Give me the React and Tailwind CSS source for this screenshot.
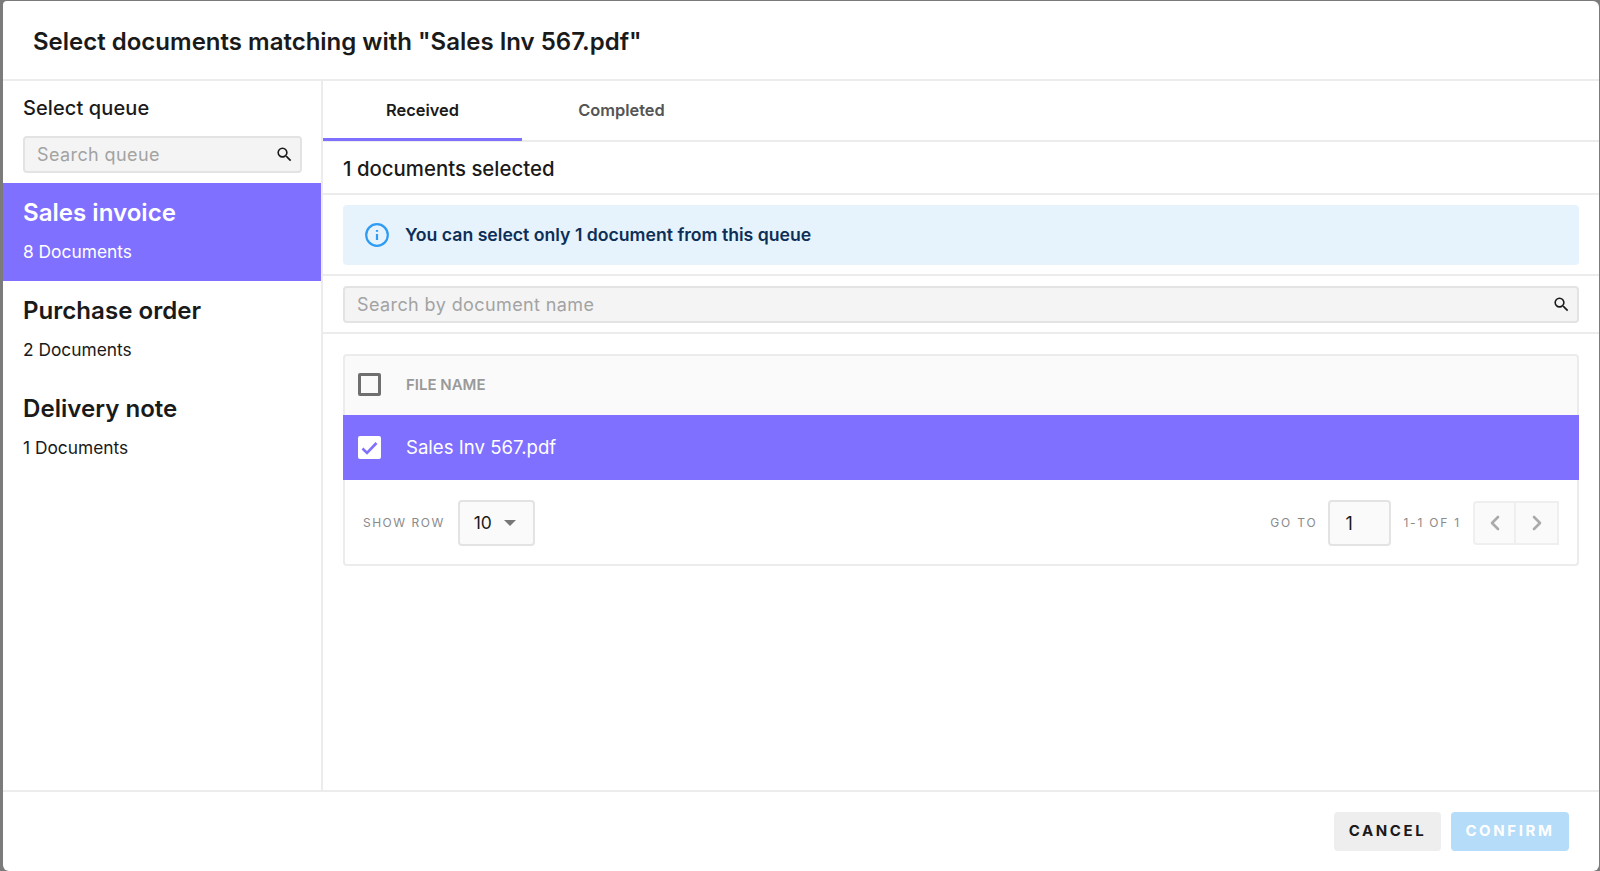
import { ChevronLeft, ChevronRight } from 'lucide-react';

const queues = [
    { name: 'Sales invoice', count: '8 Documents', active: true },
    { name: 'Purchase order', count: '2 Documents' },
    { name: 'Delivery note', count: '1 Documents' },
];

function SearchField({ placeholder }) {
    return (
        <div className="flex items-center justify-between h-full rounded-[4px] border-2 border-[#e3e3e3] bg-[#f4f4f4] pl-[12px] pr-[6px]">
            <span className="text-[18px] tracking-[0.4px] text-[#a3a3a3]">{placeholder}</span>
            <svg width="19" height="19" viewBox="0 0 24 24" fill="#1a1a1a">
                <path d="M15.5 14h-.79l-.28-.27A6.471 6.471 0 0 0 16 9.5 6.5 6.5 0 1 0 9.5 16c1.61 0 3.09-.59 4.23-1.57l.27.28v.79l5 4.99L20.49 19l-4.99-5zm-6 0C7.01 14 5 11.99 5 9.5S7.01 5 9.5 5 14 7.01 14 9.5 11.99 14 9.5 14z" />
            </svg>
        </div>
    );
}

export default function App() {
    return (
        <div className="h-[871px] bg-[#7b7b7b] pt-px pl-[3px] pr-px overflow-hidden font-['Inter',sans-serif] text-[#1a1a1a]">
            <div className="h-full flex flex-col bg-white rounded-tl-[4px] rounded-tr-[6px] rounded-b-[6px]">
                {/* Header */}
                <div className="h-[80px] shrink-0 flex items-center pl-[30px] pt-[3px] border-b-2 border-[#ececec]">
                    <h1 className="text-[24px] font-semibold">Select documents matching with "Sales Inv 567.pdf"</h1>
                </div>

                <div className="flex flex-1 min-h-0">
                    {/* Queue sidebar */}
                    <aside className="w-[320px] shrink-0 border-r-2 border-[#ececec]">
                        <div className="h-[102px] px-[20px] pt-[14px]">
                            <div className="text-[20px] font-medium tracking-[0.1px] leading-[26px] h-[41px]">Select queue</div>
                            <div className="h-[37px] w-[279px]">
                                <SearchField placeholder="Search queue" />
                            </div>
                        </div>
                        {queues.map((q) => (
                            <div
                                key={q.name}
                                className={`h-[98px] pl-[20px] pt-[15px] ${q.active ? 'bg-[#8070ff] text-white' : ''}`}
                            >
                                <div className="text-[24.1px] font-semibold leading-[30px]">{q.name}</div>
                                <div className="mt-[12px] text-[17.35px] leading-[24px]">{q.count}</div>
                            </div>
                        ))}
                    </aside>

                    {/* Documents */}
                    <main className="flex-1 min-w-0">
                        <div className="h-[61px] flex border-b-2 border-[#ececec]">
                            <div className="w-[199px] h-[60px] pt-[2px] flex items-center justify-center text-[16.4px] font-semibold border-b-[3px] border-[#8070ff]">
                                Received
                            </div>
                            <div className="w-[199px] h-[60px] pb-[1px] flex items-center justify-center text-[16.4px] font-semibold text-[#555]">
                                Completed
                            </div>
                        </div>
                        <div className="h-[53px] flex items-center pl-[20px] pt-[4px] border-b-2 border-[#ececec] text-[20.4px] font-medium">
                            1 documents selected
                        </div>
                        <div className="h-[81px] px-[20px] pt-[10px] border-b-2 border-[#ececec]">
                            <div className="h-[60px] w-[1236px] flex items-center rounded-[4px] bg-[#e6f3fd] pl-[22px]">
                                <svg width="24" height="24" viewBox="0 0 24 24" fill="none" stroke="#2f9cf4" strokeWidth="2.2">
                                    <circle cx="12" cy="12" r="10.8" />
                                    <path d="M12 11v6" />
                                    <path d="M12 7v1.8" />
                                </svg>
                                <span className="ml-[16px] text-[17.65px] font-semibold text-[#0d2f57]">
                                    You can select only 1 document from this queue
                                </span>
                            </div>
                        </div>
                        <div className="h-[58px] px-[20px] pt-[10px] border-b-2 border-[#ececec]">
                            <div className="h-[37px] w-[1236px]">
                                <SearchField placeholder="Search by document name" />
                            </div>
                        </div>

                        {/* File table */}
                        <div className="mt-[20px] ml-[20px] w-[1236px]">
                            <div className="h-[61px] flex items-center bg-[#fafafa] pl-[13px] pb-[2px] rounded-t-[4px] border-2 border-b-0 border-[#ececec]">
                                <div className="w-[23px] h-[23px] rounded-[2px] border-[3px] border-[#6f6f6f]" />
                                <span className="ml-[25px] mt-[2px] text-[15px] font-semibold text-[#999]">FILE NAME</span>
                            </div>
                            <div className="h-[65px] flex items-center bg-[#8070ff] pl-[15px] text-white">
                                <div className="w-[23px] h-[23px] rounded-[2px] bg-white flex items-center justify-center">
                                    <svg width="17" height="14" viewBox="0 0 17 14" fill="none" stroke="#8070ff" strokeWidth="2.6">
                                        <path d="M1.5 7.5l4.5 4.5L15.5 2" />
                                    </svg>
                                </div>
                                <span className="ml-[25px] text-[18.6px]">Sales Inv 567.pdf</span>
                            </div>
                            <div className="h-[86px] flex items-center pl-[18px] pr-[18px] pt-[2px] rounded-b-[4px] border-2 border-t-0 border-[#ececec]">
                                <span className="text-[12px] tracking-[1.5px] text-[#8a8a8a]">SHOW ROW</span>
                                <div className="ml-[13px] w-[77px] h-[46px] flex items-center rounded-[4px] border-2 border-[#e3e3e3] bg-[#fafafa] pl-[14px]">
                                    <span className="text-[17.5px]">10</span>
                                    <span className="ml-[12px] w-0 h-0 border-x-[6px] border-x-transparent border-t-[6px] border-t-[#777]" />
                                </div>
                                <span className="ml-auto text-[12px] tracking-[1.8px] text-[#8a8a8a]">GO TO</span>
                                <div className="ml-[11px] w-[63px] h-[46px] flex items-center rounded-[4px] border-2 border-[#e3e3e3] bg-[#fafafa] pl-[15px] text-[18px]">
                                    1
                                </div>
                                <span className="ml-[12px] text-[12px] tracking-[1.8px] text-[#8a8a8a]">1-1 OF 1</span>
                                <div className="ml-[12px] flex">
                                    <div className="w-[43px] h-[44px] flex items-center justify-center rounded-l-[4px] border-2 border-[#efefef] bg-[#fafafa]">
                                        <ChevronLeft size={24} color="#aaaaaa" strokeWidth={2.6} />
                                    </div>
                                    <div className="w-[43px] h-[44px] flex items-center justify-center border-y-2 border-r-2 border-[#efefef] bg-[#fafafa]">
                                        <ChevronRight size={24} color="#aaaaaa" strokeWidth={2.6} />
                                    </div>
                                </div>
                            </div>
                        </div>
                    </main>
                </div>

                {/* Footer */}
                <div className="h-[81px] shrink-0 flex items-start justify-end gap-[10px] pt-[20px] pr-[30px] border-t-2 border-[#ececec]">
                    <button className="w-[107px] h-[39px] rounded-[4px] bg-[#eeeeee] text-[15px] font-bold tracking-[2.6px]">
                        CANCEL
                    </button>
                    <button className="w-[118px] h-[39px] rounded-[4px] bg-[#b5dcf8] text-white text-[15px] font-bold tracking-[2.6px]">
                        CONFIRM
                    </button>
                </div>
            </div>
        </div>
    );
}
